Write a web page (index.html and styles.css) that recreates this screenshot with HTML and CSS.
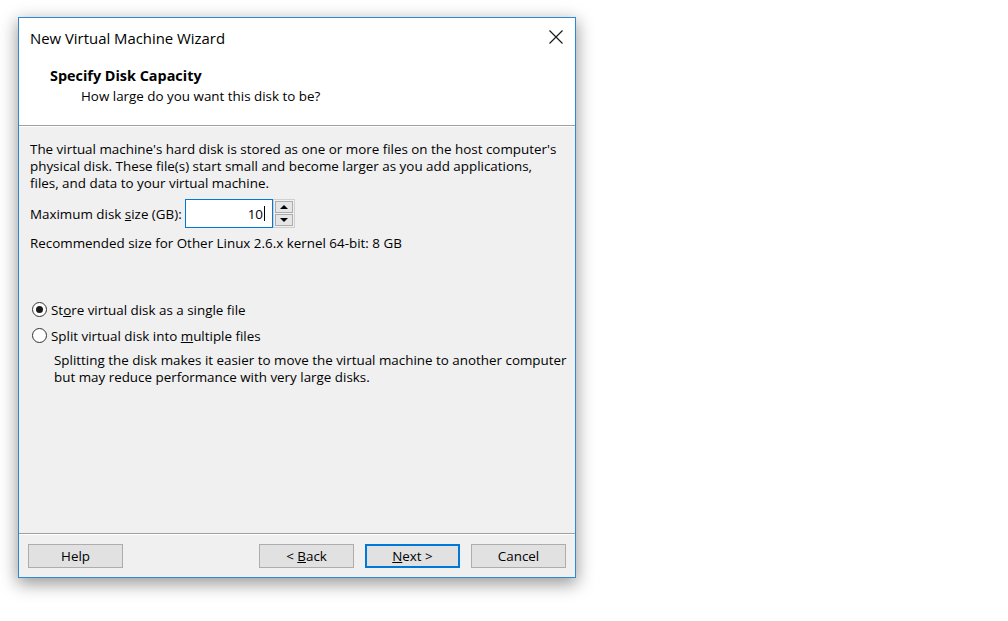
FILE: index.html
```html
<!DOCTYPE html>
<html>

<head>
    <title>New Virtual Machine Wizard</title>
    <link rel="stylesheet" href="styles.css">
</head>

<body>
    <div class="window">
        <div class="titlebar">
            <span class="title">New Virtual Machine Wizard</span>
            <span class="close">
                <svg width="14" height="14" viewBox="0 0 14 14">
                    <path d="M0.5 0.5 L13.5 13.5 M13.5 0.5 L0.5 13.5" stroke="#1a1a1a" stroke-width="1.2" fill="none"/>
                </svg>
            </span>
        </div>

        <div class="header">
            <div class="heading">Specify Disk Capacity</div>
            <div class="subheading">How large do you want this disk to be?</div>
        </div>

        <div class="content">
            <p class="text">
                The virtual machine's hard disk is stored as one or more files on the host computer's<br>
                physical disk. These file(s) start small and become larger as you add applications,<br>
                files, and data to your virtual machine.
            </p>

            <div class="size-row">
                <label class="size-label">Maximum disk <u>s</u>ize (GB):</label>
                <div class="size-input">10<span class="caret"></span></div>
                <div class="spinner">
                    <div class="spin-btn"><span class="arrow-up"></span></div>
                    <div class="spin-btn"><span class="arrow-down"></span></div>
                </div>
            </div>

            <p class="text recommend">Recommended size for Other Linux 2.6.x kernel 64-bit: 8 GB</p>

            <div class="radio-row first">
                <span class="radio checked"></span>
                <span>St<u>o</u>re virtual disk as a single file</span>
            </div>
            <div class="radio-row">
                <span class="radio"></span>
                <span>Split virtual disk into <u>m</u>ultiple files</span>
            </div>
            <p class="text note">
                Splitting the disk makes it easier to move the virtual machine to another computer<br>
                but may reduce performance with very large disks.
            </p>
        </div>

        <div class="footer">
            <button class="btn">Help</button>
            <div class="spacer"></div>
            <button class="btn">&lt; <u>B</u>ack</button>
            <button class="btn default"><u>N</u>ext &gt;</button>
            <button class="btn">Cancel</button>
        </div>
    </div>
</body>

</html>
```

FILE: styles.css
```css
* {
    box-sizing: border-box;
}

html,
body {
    height: 100%;
}

body {
    margin: 0;
    padding: 17px 0 0 18px;
    background-color: #ffffff;
    font-family: "Segoe UI", "Open Sans", sans-serif;
    font-size: 13.4px;
    color: #000000;
}

.window {
    display: flex;
    flex-direction: column;
    width: 558px;
    height: 561px;
    border: 1px solid #2d88d6;
    background-color: #f0f0f0;
    box-shadow: 0 5px 16px 1px rgba(0, 0, 0, 0.4);
}

.titlebar {
    display: flex;
    align-items: center;
    justify-content: space-between;
    height: 40px;
    padding: 0 12px 0 11px;
    background-color: #ffffff;
}

.title {
    font-size: 14.9px;
}

.close {
    display: flex;
    width: 14px;
    height: 14px;
    margin-top: -2px;
}

.header {
    height: 68px;
    padding: 9px 0 0 31px;
    background-color: #ffffff;
    border-bottom: 1px solid #a0a0a0;
}

.heading {
    font-size: 14.4px;
    font-weight: bold;
    line-height: 17px;
}

.subheading {
    margin-top: 4px;
    padding-left: 31px;
    line-height: 17px;
}

.content {
    flex: 1;
    padding: 14px 8px 0 11px;
    border-top: 1px solid #ffffff;
}

.text {
    margin: 0;
    line-height: 17px;
    white-space: nowrap;
}

.size-row {
    display: flex;
    align-items: center;
    height: 29px;
    margin-top: 7px;
}

.size-label {
    width: 155px;
}

.size-input {
    display: flex;
    align-items: center;
    justify-content: flex-end;
    width: 88px;
    height: 29px;
    padding-right: 7px;
    background-color: #ffffff;
    border: 1px solid #0078d7;
}

.caret {
    width: 1px;
    height: 15px;
    margin-left: 1px;
    background-color: #000000;
}

.spinner {
    display: flex;
    flex-direction: column;
    gap: 1px;
    width: 22px;
    height: 29px;
    padding: 1px;
    border: 1px solid #d0d0d0;
    background-color: #f0f0f0;
}

.spin-btn {
    display: flex;
    align-items: center;
    justify-content: center;
    flex: 1;
    border: 1px solid #adadad;
    background-color: #e5e5e5;
}

.arrow-up {
    border-left: 4px solid transparent;
    border-right: 4px solid transparent;
    border-bottom: 4px solid #000000;
}

.arrow-down {
    border-left: 4px solid transparent;
    border-right: 4px solid transparent;
    border-top: 4px solid #000000;
}

.recommend {
    margin-top: 7px;
}

.radio-row {
    display: flex;
    align-items: center;
    gap: 4px;
    height: 17px;
    margin-top: 9px;
    padding-left: 2px;
}

.radio-row.first {
    margin-top: 49px;
}

.radio {
    display: flex;
    align-items: center;
    justify-content: center;
    width: 15px;
    height: 15px;
    border: 1px solid #333333;
    border-radius: 50%;
    background-color: #ffffff;
}

.radio.checked::after {
    content: "";
    width: 7px;
    height: 7px;
    border-radius: 50%;
    background-color: #1a1a1a;
}

.note {
    margin-top: 8px;
    padding-left: 24px;
}

.footer {
    display: flex;
    align-items: center;
    gap: 11px;
    height: 44px;
    padding: 0 9px;
    border-top: 1px solid #a0a0a0;
    box-shadow: inset 0 1px 0 #ffffff;
}

.spacer {
    flex: 1;
}

.btn {
    width: 95px;
    height: 24px;
    padding: 0;
    font-family: inherit;
    font-size: 13.4px;
    color: #000000;
    background-color: #e1e1e1;
    border: 1px solid #adadad;
}

.btn.default {
    border: 2px solid #0078d7;
}
```
